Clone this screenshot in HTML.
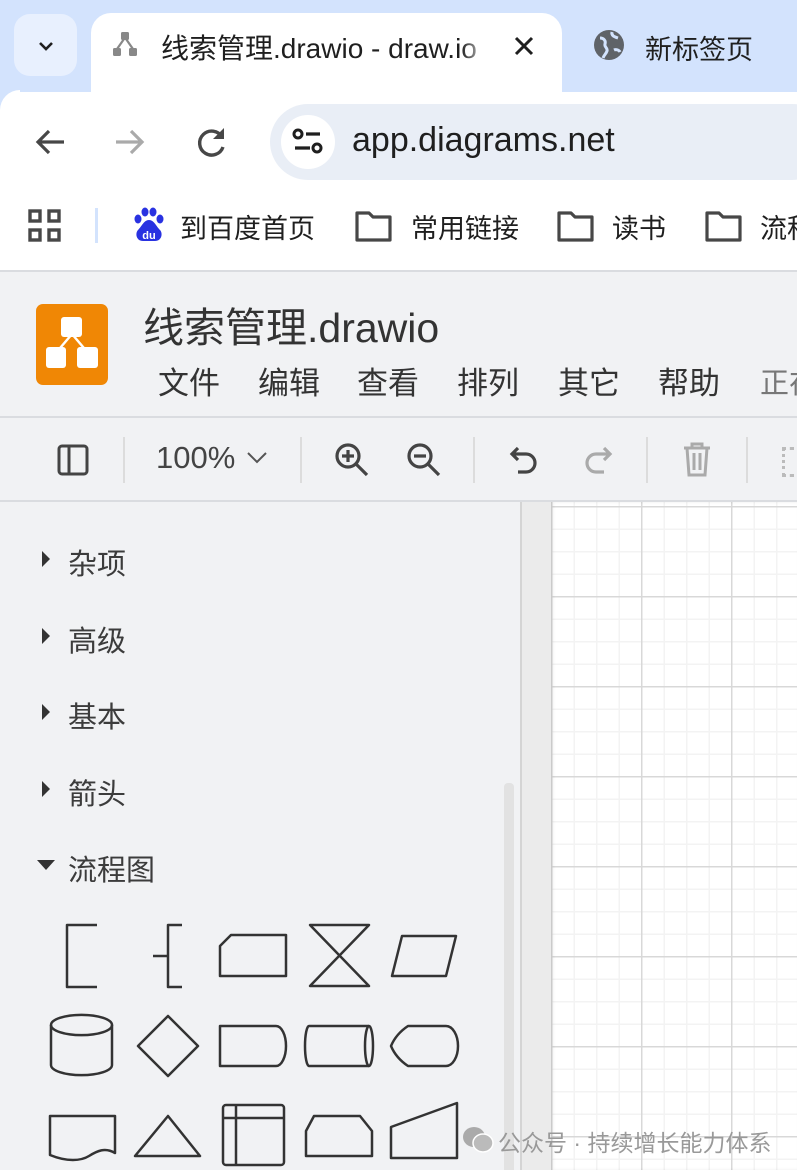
<!DOCTYPE html>
<html><head><meta charset="utf-8"><style>
*{margin:0;padding:0;box-sizing:border-box}
html,body{width:797px;height:1170px;overflow:hidden}
body{position:relative;background:#fff;font-family:"Liberation Sans","Noto Sans CJK SC",sans-serif;color:#3c3c3c}
.a{position:absolute}
.t{white-space:nowrap}
</style></head><body>
<!-- tab strip -->
<div class="a" style="left:0;top:0;width:797px;height:92px;background:#d3e3fd"></div>
<div class="a" style="left:14px;top:14px;width:63px;height:62px;border-radius:16px;background:#e8f0fe"></div>
<svg class="a" style="left:36px;top:36px" width="20" height="20" viewBox="0 0 20 20"><path d="M4 7l6 6 6-6" fill="none" stroke="#1f1f1f" stroke-width="2.6"/></svg>
<div class="a" style="left:91px;top:13px;width:471px;height:90px;background:#fff;border-radius:20px 20px 0 0"></div>
<svg class="a" style="left:111px;top:30px" width="28" height="28" viewBox="0 0 28 28"><g fill="#888"><rect x="10" y="2" width="8" height="8" rx="1.5"/><rect x="2" y="18" width="8" height="8" rx="1.5"/><rect x="18" y="18" width="8" height="8" rx="1.5"/><path d="M13 9l-7 10M15 9l7 10" stroke="#888" stroke-width="2.2"/></g></svg>
<div class="a t" style="left:161px;top:27px;font-size:28px;color:#1f1f1f;width:330px;overflow:hidden;-webkit-mask-image:linear-gradient(90deg,#000 300px,transparent 330px)">线索管理.drawio - draw.io</div>
<svg class="a" style="left:512px;top:34px" width="24" height="24" viewBox="0 0 24 24"><path d="M4 4l16 16M20 4L4 20" stroke="#1f1f1f" stroke-width="3"/></svg>
<svg class="a" style="left:592px;top:28px" width="34" height="34" viewBox="0 0 34 34"><circle cx="17" cy="17" r="15" fill="#5f6368"/><path d="M8 10c4 0 6 3 5 6s3 4 2 7-3 4-4 7M20 4c-1 4 3 5 6 6M22 22c2-1 5 0 6 2" stroke="#d3e3fd" stroke-width="3" fill="none"/></svg>
<div class="a t" style="left:645px;top:28px;font-size:27px;color:#1f1f1f">新标签页</div>
<!-- address area -->
<div class="a" style="left:0;top:92px;width:797px;height:178px;background:#fff"></div>
<div class="a" style="left:0;top:90px;width:20px;height:20px;background:#d3e3fd"></div>
<div class="a" style="left:0;top:90px;width:20px;height:20px;background:#fff;border-radius:20px 0 0 0"></div>
<svg class="a" style="left:30px;top:124px" width="40" height="36" viewBox="0 0 40 36"><path d="M34 18H8M19 7L8 18l11 11" fill="none" stroke="#474747" stroke-width="3.2"/></svg>
<svg class="a" style="left:110px;top:124px" width="40" height="36" viewBox="0 0 40 36"><path d="M6 18h26M21 7l11 11-11 11" fill="none" stroke="#aaa" stroke-width="3.2"/></svg>
<svg class="a" style="left:192px;top:122px" width="40" height="40" viewBox="0 0 40 40"><path d="M30 15A12 12 0 1 0 31 25" fill="none" stroke="#474747" stroke-width="3.4"/><path d="M32 6v11H21z" fill="#474747"/></svg>
<div class="a" style="left:270px;top:104px;width:560px;height:76px;border-radius:38px;background:#e9eef6"></div>
<div class="a" style="left:281px;top:115px;width:54px;height:54px;border-radius:50%;background:#fff"></div>
<svg class="a" style="left:290px;top:126px" width="36" height="32" viewBox="0 0 36 32"><circle cx="8" cy="8" r="4" fill="none" stroke="#1f1f1f" stroke-width="3"/><path d="M16 8h14M5 22h15" stroke="#1f1f1f" stroke-width="3.2"/><circle cx="27" cy="22" r="4" fill="none" stroke="#1f1f1f" stroke-width="3"/></svg>
<div class="a t" style="left:352px;top:121px;font-size:34px;color:#1f1f1f">app.diagrams.net</div>
<!-- bookmarks -->
<svg class="a" style="left:28px;top:209px" width="34" height="34" viewBox="0 0 34 34"><g fill="none" stroke="#474747" stroke-width="3.4"><rect x="2" y="2" width="10" height="10"/><rect x="21" y="2" width="10" height="10"/><rect x="2" y="21" width="10" height="10"/><rect x="21" y="21" width="10" height="10"/></g></svg>
<div class="a" style="left:95px;top:208px;width:3px;height:35px;background:#d3e3fd"></div>
<svg class="a" style="left:132px;top:207px" width="34" height="36" viewBox="0 0 34 36"><g fill="#2932e1"><ellipse cx="6" cy="12" rx="3.5" ry="4.5"/><ellipse cx="13" cy="5" rx="3.5" ry="4.5"/><ellipse cx="21" cy="5" rx="3.5" ry="4.5"/><ellipse cx="28" cy="12" rx="3.5" ry="4.5"/><path d="M17 13c-5 0-7 6-11 10-3 3-2 11 5 11h12c7 0 8-8 5-11-4-4-6-10-11-10z"/></g><text x="17" y="32" font-size="11" fill="#fff" text-anchor="middle" font-family="Liberation Sans" font-weight="bold">du</text></svg>
<div class="a t" style="left:180px;top:207px;font-size:27px;color:#1f1f1f">到百度首页</div>
<svg class="a" style="left:355px;top:210px" width="38" height="32" viewBox="0 0 38 32"><path d="M2 3h12l4 4h17v23H2z" fill="none" stroke="#474747" stroke-width="3.2" stroke-linejoin="round"/></svg>
<div class="a t" style="left:411px;top:207px;font-size:27px;color:#1f1f1f">常用链接</div>
<svg class="a" style="left:557px;top:210px" width="38" height="32" viewBox="0 0 38 32"><path d="M2 3h12l4 4h17v23H2z" fill="none" stroke="#474747" stroke-width="3.2" stroke-linejoin="round"/></svg>
<div class="a t" style="left:612px;top:207px;font-size:27px;color:#1f1f1f">读书</div>
<svg class="a" style="left:705px;top:210px" width="38" height="32" viewBox="0 0 38 32"><path d="M2 3h12l4 4h17v23H2z" fill="none" stroke="#474747" stroke-width="3.2" stroke-linejoin="round"/></svg>
<div class="a t" style="left:760px;top:207px;font-size:27px;color:#1f1f1f">流程</div>
<!-- drawio header -->
<div class="a" style="left:0;top:270px;width:797px;height:232px;background:#f1f2f4;border-top:2px solid #dadce0"></div>
<div class="a" style="left:36px;top:304px;width:72px;height:81px;border-radius:7px;background:#f08705"></div>
<svg class="a" style="left:36px;top:304px" width="72" height="81" viewBox="0 0 72 81"><path d="M36 30L19 50M36 30l17 20" stroke="#fff" stroke-width="2.5"/><g fill="#fff"><rect x="25" y="13" width="21" height="20" rx="3"/><rect x="10" y="43" width="20" height="21" rx="3"/><rect x="41" y="43" width="21" height="21" rx="3"/></g></svg>
<div class="a t" style="left:143px;top:294px;font-size:41px;color:#333">线索管理.drawio</div>
<div class="a t" style="left:158px;top:358px;font-size:31px;color:#333">文件</div>
<div class="a t" style="left:258px;top:358px;font-size:31px;color:#333">编辑</div>
<div class="a t" style="left:357px;top:358px;font-size:31px;color:#333">查看</div>
<div class="a t" style="left:457px;top:358px;font-size:31px;color:#333">排列</div>
<div class="a t" style="left:558px;top:358px;font-size:31px;color:#333">其它</div>
<div class="a t" style="left:658px;top:358px;font-size:31px;color:#333">帮助</div>
<div class="a t" style="left:760px;top:360px;font-size:29px;color:#777">正在</div>
<div class="a" style="left:0;top:416px;width:797px;height:2px;background:#dadce0"></div>
<!-- toolbar -->
<svg class="a" style="left:56px;top:443px" width="34" height="34" viewBox="0 0 34 34"><rect x="3" y="3" width="28" height="28" rx="3" fill="none" stroke="#444" stroke-width="3"/><path d="M13 3v28" stroke="#444" stroke-width="3"/></svg>
<div class="a" style="left:123px;top:437px;width:2px;height:46px;background:#dcdcdc"></div>
<div class="a t" style="left:156px;top:440px;font-size:31px;color:#444">100%</div>
<svg class="a" style="left:246px;top:450px" width="22" height="16" viewBox="0 0 22 16"><path d="M2 3l9 9 9-9" fill="none" stroke="#555" stroke-width="2"/></svg>
<div class="a" style="left:300px;top:437px;width:2px;height:46px;background:#dcdcdc"></div>
<svg class="a" style="left:334px;top:442px" width="36" height="36" viewBox="0 0 36 36"><circle cx="14" cy="14" r="11" fill="none" stroke="#444" stroke-width="3.2"/><path d="M22 22l11 11M14 8v12M8 14h12" stroke="#444" stroke-width="3.2"/></svg>
<svg class="a" style="left:406px;top:442px" width="36" height="36" viewBox="0 0 36 36"><circle cx="14" cy="14" r="11" fill="none" stroke="#444" stroke-width="3.2"/><path d="M22 22l11 11M8 14h12" stroke="#444" stroke-width="3.2"/></svg>
<div class="a" style="left:473px;top:437px;width:2px;height:46px;background:#dcdcdc"></div>
<svg class="a" style="left:508px;top:444px" width="34" height="32" viewBox="0 0 34 32"><path d="M10 4L4 10l6 6M4 10h14a9 9 0 0 1 0 18H10" fill="none" stroke="#444" stroke-width="3.2"/></svg>
<svg class="a" style="left:580px;top:444px" width="34" height="32" viewBox="0 0 34 32"><path d="M24 4l6 6-6 6M30 10H16a9 9 0 0 0 0 18h8" fill="none" stroke="#aaa" stroke-width="3.2"/></svg>
<div class="a" style="left:646px;top:437px;width:2px;height:46px;background:#dcdcdc"></div>
<svg class="a" style="left:682px;top:441px" width="30" height="36" viewBox="0 0 30 36"><path d="M2 7h26M10 7V3h10v4M5 7l2 27h16l2-27M12 12v17M18 12v17" fill="none" stroke="#aaa" stroke-width="3"/></svg>
<div class="a" style="left:746px;top:437px;width:2px;height:46px;background:#dcdcdc"></div>
<div class="a" style="left:782px;top:447px;width:12px;height:30px;border:3px dotted #bbb;border-right:none"></div>
<div class="a" style="left:0;top:500px;width:797px;height:2px;background:#dadce0"></div>
<!-- sidebar -->
<div class="a" style="left:0;top:502px;width:520px;height:668px;background:#f1f2f4"></div>
<div class="a" style="left:520px;top:502px;width:2px;height:668px;background:#d4d4d4"></div>
<div class="a" style="left:522px;top:502px;width:29px;height:668px;background:#ebebeb"></div>
<div class="a" style="left:504px;top:783px;width:10px;height:387px;border-radius:4px 4px 0 0;background:#e2e2e2"></div>
<svg class="a" style="left:40px;top:549px" width="12" height="20"><path d="M2 2l8 8-8 8z" fill="#333"/></svg>
<div class="a t" style="left:68px;top:541px;font-size:29px">杂项</div>
<svg class="a" style="left:40px;top:626px" width="12" height="20"><path d="M2 2l8 8-8 8z" fill="#333"/></svg>
<div class="a t" style="left:68px;top:618px;font-size:29px">高级</div>
<svg class="a" style="left:40px;top:702px" width="12" height="20"><path d="M2 2l8 8-8 8z" fill="#333"/></svg>
<div class="a t" style="left:68px;top:694px;font-size:29px">基本</div>
<svg class="a" style="left:40px;top:779px" width="12" height="20"><path d="M2 2l8 8-8 8z" fill="#333"/></svg>
<div class="a t" style="left:68px;top:771px;font-size:29px">箭头</div>
<svg class="a" style="left:36px;top:859px" width="20" height="12"><path d="M1 1h18l-9 10z" fill="#333"/></svg>
<div class="a t" style="left:68px;top:847px;font-size:29px">流程图</div>
<svg class="a" style="left:0;top:900px" width="520" height="270" viewBox="0 0 520 270"><g fill="none" stroke="#333" stroke-width="2.5" stroke-linejoin="round">
<path d="M97 25H67v62h30"/>
<path d="M182 25h-14v62h14M168 56h-15"/>
<path d="M231 35h55v41h-66V46z"/>
<path d="M310 25h59l-59 61h59z"/>
<path d="M402 36h54l-10 40h-54z"/>
<path d="M51 125a30 10 0 0 1 61 0v40a30 10 0 0 1-61 0z"/><path d="M51 125a30 10 0 0 0 61 0"/>
<path d="M168 116l30 30-30 30-30-30z"/>
<path d="M220 126h56a10 20 0 0 1 0 40h-56z"/>
<path d="M309 126h60a4 20 0 0 1 0 40h-60a4 20 0 0 1 0-40z"/><path d="M369 126a4 20 0 0 0 0 40"/>
<path d="M408 126h38a12 20 0 0 1 0 40h-38q-12-8-17-20q5-12 17-20z"/>
<path d="M50 216h65v37c-10-6-18-2-26 3s-22 6-39-1z"/>
<path d="M168 216l32 40h-65z"/>
<rect x="223" y="205" width="61" height="60" rx="3"/><path d="M236 205v60M223 218h61"/>
<path d="M314 216h46l12 15v25h-66v-25z"/>
<path d="M391 227l66-24v55h-66z"/>
</g></svg>
<!-- canvas -->
<div class="a" style="left:551px;top:502px;width:246px;height:668px;background-color:#fff;
background-image:linear-gradient(90deg,#d8d8d8 1.5px,transparent 1.5px),linear-gradient(#d8d8d8 1.5px,transparent 1.5px),linear-gradient(90deg,#f3f3f3 1.5px,transparent 1.5px),linear-gradient(#f3f3f3 1.5px,transparent 1.5px);
background-size:90px 90px,90px 90px,22.5px 22.5px,22.5px 22.5px;background-position:0 4px,0 4px,0 4px,0 4px;box-shadow:inset 2px 0 3px rgba(0,0,0,.08)"></div>
<!-- watermark -->
<svg class="a" style="left:462px;top:1126px" width="32" height="28" viewBox="0 0 32 28"><ellipse cx="12" cy="11" rx="11" ry="10" fill="#aaa"/><ellipse cx="21" cy="17" rx="10" ry="9" fill="#bbb" stroke="#fff" stroke-width="1.5"/></svg>
<div class="a t" style="left:498px;top:1124px;font-size:23px;color:#999">公众号 · 持续增长能力体系</div>
</body></html>
